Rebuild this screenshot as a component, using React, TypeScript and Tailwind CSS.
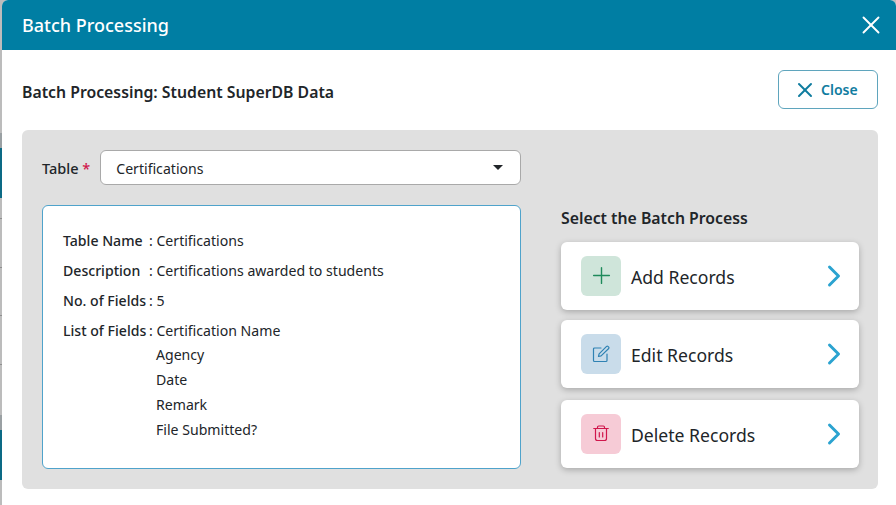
import { ChevronRight, Plus, X } from "lucide-react";

const fields = [
  { label: "Table Name", value: "Certifications" },
  { label: "Description", value: "Certifications awarded to students" },
  { label: "No. of Fields", value: "5" },
];

const otherFields = ["Agency", "Date", "Remark", "File Submitted?"];

const EditIcon = () => (
  <svg width="18" height="18" viewBox="0 0 18 18" fill="none" stroke="#2f82b3" strokeWidth="1.2" strokeLinejoin="round" strokeLinecap="round">
    <path d="M9 3H2.5a1 1 0 0 0-1 1v11.5a1 1 0 0 0 1 1H14a1 1 0 0 0 1-1V9" />
    <path d="M6.5 11.5l.6-2.6 7.5-7.5a.9.9 0 0 1 1.3 0l.8.8a.9.9 0 0 1 0 1.3l-7.6 7.4z" />
  </svg>
);

const TrashIcon = () => (
  <svg width="16" height="17" viewBox="0 0 16 17" fill="none" stroke="#d0174c" strokeWidth="1.2" strokeLinecap="round">
    <path d="M.75 3.5h14.5" />
    <path d="M4.5 3.5V2.2A1.2 1.2 0 0 1 5.7 1h4.6a1.2 1.2 0 0 1 1.2 1.2v1.3" />
    <path d="M2.5 3.5v10a2 2 0 0 0 2 2h7a2 2 0 0 0 2-2v-10" />
    <path d="M6.3 7.5V12M9.7 7.5V12" />
  </svg>
);

const actions = [
  { label: "Add Records", tile: "bg-[#cfe5da]", gap: "", icon: <Plus className="h-[27px] w-[27px] text-[#1f8a5b]" strokeWidth={1.25} /> },
  { label: "Edit Records", tile: "bg-[#c9dcea]", gap: "mt-[10px]", icon: <EditIcon /> },
  { label: "Delete Records", tile: "bg-[#f6cbd6]", gap: "mt-[12px]", icon: <TrashIcon /> },
];

// sliver of the page behind the dialog
const backdrop = [
  "h-[133px]",
  "h-[15px] bg-[#9aa0a3]",
  "h-[50px] bg-[#0c6a85]",
  "h-[20px]",
  "h-px bg-[#8f8f8f]",
  "h-[48px]",
  "h-px bg-[#8f8f8f]",
  "h-[47px]",
  "h-px bg-[#8f8f8f]",
  "h-[48px]",
  "h-px bg-[#8f8f8f]",
  "h-[50px]",
  "h-[15px] bg-[#9aa0a3]",
  "h-[50px] bg-[#0c6a85]",
];

export default function App() {
  return (
    <div className="flex h-[505px] w-[896px] overflow-hidden bg-[#bcbcbc] font-['Noto_Sans',sans-serif] text-[#212529]">
      <div className="flex w-[2px] shrink-0 flex-col">
        {backdrop.map((cls, i) => (
          <div key={i} className={cls} />
        ))}
      </div>

      <div className="h-full flex-1 rounded-t-md bg-white">
        {/* Header */}
        <div className="flex h-[50px] items-center justify-between rounded-t-md bg-[#007ea3] pl-5 pr-[10px] text-white">
          <span className="text-lg font-medium">Batch Processing</span>
          <X className="h-[30px] w-[30px]" strokeWidth={1.5} />
        </div>

        <div className="pl-5 pr-[18px]">
          <div className="flex h-[80px] items-center justify-between">
            <h2 className="mt-[6px] text-[15.8px] font-semibold">Batch Processing: Student SuperDB Data</h2>
            <button className="mb-[1px] flex h-[39px] w-[100px] items-center gap-1 rounded-md border border-[#5fa5bd] pl-[14px] text-sm font-semibold text-[#0f7c9f]">
              <X className="h-6 w-6" strokeWidth={2} />
              Close
            </button>
          </div>

          <div className="h-[359px] rounded-md bg-[#e0e0e0] pl-5 pt-5">
            <div className="flex items-center gap-[10px]">
              <label className="pt-[2px] text-[14.5px] font-medium">
                Table <span className="text-[#d0174c]">*</span>
              </label>
              <div className="flex h-[35px] w-[421px] items-center justify-between rounded-md border border-[#a9a9a9] bg-white pl-[15px] pr-[17px] text-[14.1px]">
                <span className="pt-[2px]">Certifications</span>
                <span className="h-0 w-0 border-x-[5px] border-t-[5px] border-x-transparent border-t-[#212529]" />
              </div>
            </div>

            <div className="mt-[20px] flex gap-10">
              <div className="h-[264px] w-[479px] rounded-md border border-[#4fa3cb] bg-white pl-5 pt-[25px] text-[14.1px]">
                <div className="flex flex-col gap-[10px]">
                  {fields.map((field) => (
                    <div key={field.label} className="flex h-5 items-center">
                      <span className="w-[86px] font-medium">{field.label}</span>
                      <span>: {field.value}</span>
                    </div>
                  ))}
                  <div className="flex">
                    <span className="w-[86px] font-medium leading-5">List of Fields</span>
                    <div className="leading-[25px]">
                      <div className="leading-5">: Certification Name</div>
                      <div className="mt-[1px] flex flex-col pl-[7px]">
                        {otherFields.map((name) => (
                          <span key={name}>{name}</span>
                        ))}
                      </div>
                    </div>
                  </div>
                </div>
              </div>

              <div className="w-[298px]">
                <h3 className="mt-[2px] text-[15.8px] font-semibold">Select the Batch Process</h3>
                <div className="mt-[11px] flex flex-col">
                  {actions.map((action) => (
                    <div key={action.label} className={`flex h-[68px] items-center rounded-md bg-white pl-[20px] pr-[7px] shadow-[0_2px_6px_rgba(0,0,0,0.25)] ${action.gap}`}>
                      <div className={`flex h-10 w-10 items-center justify-center rounded-md ${action.tile}`}>{action.icon}</div>
                      <span className="ml-[10px] mt-[4px] flex-1 text-[17.6px] text-[#212529]">{action.label}</span>
                      <ChevronRight className="h-9 w-9 text-[#2ba3d0]" strokeWidth={2} />
                    </div>
                  ))}
                </div>
              </div>
            </div>
          </div>
        </div>
      </div>
    </div>
  );
}
